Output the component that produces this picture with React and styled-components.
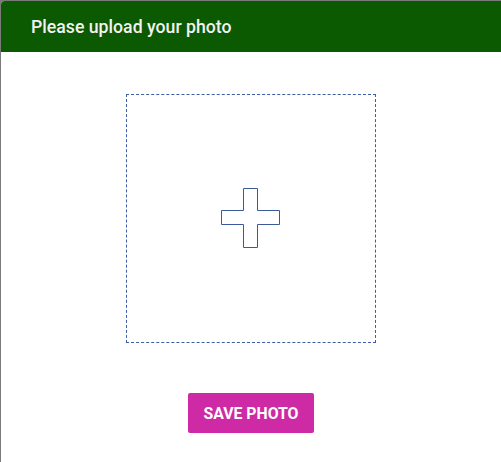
import React from 'react'
import styled, { createGlobalStyle } from 'styled-components'

const Global = createGlobalStyle`
  html, body {
    margin: 0;
    padding: 0;
    background: #7a7a7a;
    font-family: Roboto, "Liberation Sans", sans-serif;
  }
`

const Backdrop = styled.div`
  width: 501px;
  height: 462px;
  padding: 1px 0 0 1px;
  box-sizing: border-box;
  overflow: hidden;
`

const Modal = styled.div`
  width: 504px;
  height: 470px;
  background: #fff;
  border-radius: 4px 4px 0 0;
  overflow: hidden;
  display: flex;
  flex-direction: column;
`

const Header = styled.header`
  height: 51px;
  flex-shrink: 0;
  background: #0b5900;
  display: flex;
  align-items: center;
  padding-left: 30px;
  color: #f2f2f2;
  font-size: 17.7px;
  font-weight: 500;
`

const Body = styled.div`
  width: 500px;
  display: flex;
  flex-direction: column;
  align-items: center;
  padding-top: 42px;
`

const DropZone = styled.div`
  width: 250px;
  height: 249px;
  box-sizing: border-box;
  border: 1px dashed #3a5ea8;
  display: flex;
  align-items: center;
  justify-content: center;
  cursor: pointer;
`

const SaveButton = styled.button`
  margin-top: 50px;
  width: 126px;
  height: 40px;
  border: none;
  border-radius: 2px;
  background: #cf2aa6;
  color: #fff;
  font-family: Roboto, "Liberation Sans", sans-serif;
  font-size: 15.8px;
  font-weight: 700;
  text-transform: uppercase;
  cursor: pointer;
`

const PlusIcon = () => (
  <svg width="61" height="61" viewBox="0 0 61 61">
    <path
      d="M22.5 0.5 H36.5 V22.5 H58.5 V36.5 H36.5 V59.5 H22.5 V36.5 H0.5 V22.5 H22.5 Z"
      fill="none"
      stroke="#3a5a9a"
      strokeWidth="1"
    />
  </svg>
)

const App = () => {
  return (
    <>
      <Global />
      <Backdrop>
        <Modal>
          <Header>Please upload your photo</Header>
          <Body>
            <DropZone>
              <PlusIcon />
            </DropZone>
            <SaveButton>Save photo</SaveButton>
          </Body>
        </Modal>
      </Backdrop>
    </>
  )
}

export default App
